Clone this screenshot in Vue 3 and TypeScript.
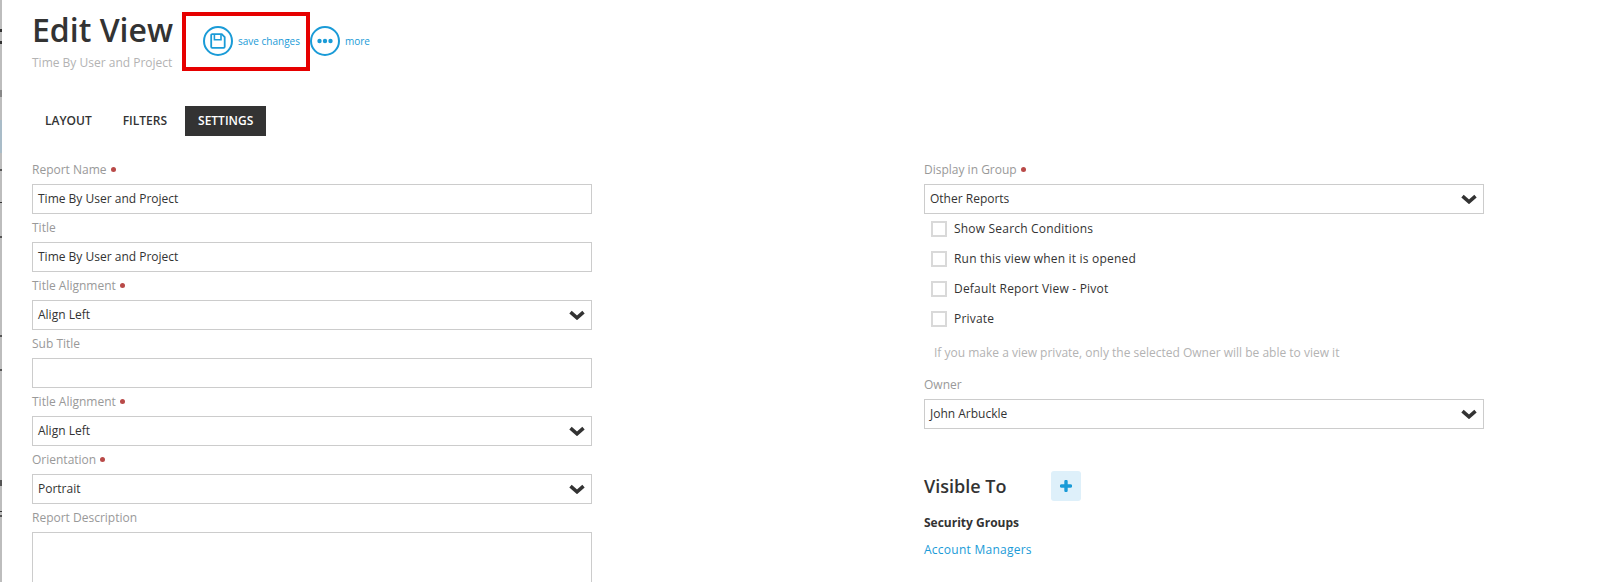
<script setup lang="ts">
interface Field {
  label: string
  required?: boolean
  value?: string
  select?: boolean
  area?: boolean
}

const leftFields: Field[] = [
  { label: 'Report Name', required: true, value: 'Time By User and Project' },
  { label: 'Title', value: 'Time By User and Project' },
  { label: 'Title Alignment', required: true, value: 'Align Left', select: true },
  { label: 'Sub Title', value: '' },
  { label: 'Title Alignment', required: true, value: 'Align Left', select: true },
  { label: 'Orientation', required: true, value: 'Portrait', select: true },
  { label: 'Report Description', value: '', area: true },
]

const checks = [
  'Show Search Conditions',
  'Run this view when it is opened',
  'Default Report View - Pivot',
  'Private',
]
const tabs = ['LAYOUT', 'FILTERS', 'SETTINGS']
</script>

<template>
  <div class="page">
    <div class="edge"></div>
    <header class="head">
      <div class="heading">
        <h1>Edit View</h1>
        <p>Time By User and Project</p>
      </div>
      <div class="actions">
        <a class="action save">
          <span class="circle">
            <svg width="16" height="16" viewBox="0 0 16 16" fill="none">
              <path d="M2.2 1.2h9.6l2.9 2.9v9.7a1 1 0 0 1-1 1H2.2a1 1 0 0 1-1-1V2.2a1 1 0 0 1 1-1z" stroke="#1a9bd7" stroke-width="1.8" />
              <path d="M4.4 1.2v5.6h6.6V1.2" stroke="#1a9bd7" stroke-width="1.6" />
            </svg>
          </span>
          <span>save changes</span>
        </a>
        <a class="action">
          <span class="circle">
            <svg width="18" height="6" viewBox="0 0 18 6" fill="#1a9bd7">
              <circle cx="3.5" cy="3" r="2.2" />
              <circle cx="9" cy="3" r="2.2" />
              <circle cx="14.5" cy="3" r="2.2" />
            </svg>
          </span>
          <span>more</span>
        </a>
        <div class="highlight"></div>
      </div>
    </header>

    <nav class="tabs">
      <a v-for="t in tabs" :key="t" class="tab" :class="{ active: t === 'SETTINGS' }">{{ t }}</a>
    </nav>

    <main class="cols">
      <section class="col">
        <div v-for="(f, i) in leftFields" :key="i" class="group">
          <label class="label">{{ f.label }}<i v-if="f.required" class="dot"></i></label>
          <div class="field" :class="{ area: f.area }">
            <span>{{ f.value }}</span>
            <svg v-if="f.select" class="chev" width="16" height="10" viewBox="0 0 16 10">
              <path d="M1.5 2.2 8 7.8l6.5-5.6" fill="none" stroke="#333" stroke-width="3.6" />
            </svg>
          </div>
        </div>
      </section>

      <section class="col">
        <div class="group">
          <label class="label">Display in Group<i class="dot"></i></label>
          <div class="field">
            <span>Other Reports</span>
            <svg class="chev" width="16" height="10" viewBox="0 0 16 10">
              <path d="M1.5 2.2 8 7.8l6.5-5.6" fill="none" stroke="#333" stroke-width="3.6" />
            </svg>
          </div>
        </div>
        <div class="checks">
          <div v-for="c in checks" :key="c" class="check">
            <span class="box"></span>
            <span>{{ c }}</span>
          </div>
        </div>
        <p class="hint">If you make a view private, only the selected Owner will be able to view it</p>
        <div class="group">
          <label class="label">Owner</label>
          <div class="field">
            <span>John Arbuckle</span>
            <svg class="chev" width="16" height="10" viewBox="0 0 16 10">
              <path d="M1.5 2.2 8 7.8l6.5-5.6" fill="none" stroke="#333" stroke-width="3.6" />
            </svg>
          </div>
        </div>
        <div class="visible">
          <h2>Visible To</h2>
          <button class="plus" type="button">
            <svg width="12" height="12" viewBox="0 0 12 12">
              <path d="M6 1.5v9M1.5 6h9" stroke="#1a9bd7" stroke-width="3.4" stroke-linecap="round" />
            </svg>
          </button>
        </div>
        <h3>Security Groups</h3>
        <a class="link">Account Managers</a>
      </section>
    </main>
  </div>
</template>

<style>
html,
body {
  margin: 0;
  overflow: hidden;
  background: #fff;
}
</style>

<style scoped>
.page {
  position: relative;
  height: 582px;
  overflow: hidden;
  padding-left: 32px;
  background: #fff;
  color: #333;
  font-family: "Open Sans", "Liberation Sans", sans-serif;
  font-size: 12px;
}
.edge {
  position: absolute;
  left: 0;
  top: 0;
  width: 2px;
  height: 582px;
  background:
    linear-gradient(#333, #333) 0 29px / 2px 3px no-repeat,
    linear-gradient(#333, #333) 0 41px / 2px 3px no-repeat,
    linear-gradient(#888, #888) 0 90px / 2px 7px no-repeat,
    linear-gradient(#a9bcc8, #a9bcc8) 0 120px / 2px 33px no-repeat,
    linear-gradient(#555, #555) 0 169px / 2px 2px no-repeat,
    linear-gradient(#333, #333) 0 202px / 2px 1px no-repeat,
    linear-gradient(#555, #555) 0 236px / 2px 2px no-repeat,
    linear-gradient(#555, #555) 0 335px / 2px 2px no-repeat,
    linear-gradient(#555, #555) 0 369px / 2px 2px no-repeat,
    linear-gradient(#555, #555) 0 480px / 2px 6px no-repeat,
    linear-gradient(#333, #333) 0 511px / 2px 1px no-repeat,
    linear-gradient(#555, #555) 0 515px / 2px 2px no-repeat,
    #bdbdbd;
}
.head {
  display: flex;
  align-items: flex-start;
  height: 106px;
}
.heading {
  width: 141px;
}
h1 {
  margin: 11px 0 0;
  font-size: 32px;
  line-height: 38px;
  font-weight: 600;
  white-space: nowrap;
}
.heading p {
  margin: 6px 0 0;
  color: #b3b3b3;
  font-size: 12px;
  line-height: 16px;
  white-space: nowrap;
}
.actions {
  position: relative;
  display: flex;
  gap: 10px;
  margin: 26px 0 0 30px;
}
.action {
  display: flex;
  align-items: center;
  gap: 5px;
  color: #1a9bd7;
  font-size: 10px;
  white-space: nowrap;
}
.circle {
  display: flex;
  align-items: center;
  justify-content: center;
  box-sizing: border-box;
  width: 30px;
  height: 30px;
  border: 2px solid #1a9bd7;
  border-radius: 50%;
}
.highlight {
  position: absolute;
  left: -21px;
  top: -14px;
  box-sizing: border-box;
  width: 128px;
  height: 59px;
  border: 4px solid #e60000;
}
.tabs {
  display: flex;
  gap: 5px;
  height: 30px;
}
.tab {
  display: flex;
  align-items: center;
  padding: 0 13px 2px;
  font-weight: 600;
  color: #333;
}
.tab.active {
  background: #333;
  color: #fff;
}
.cols {
  display: grid;
  grid-template-columns: 560px 560px;
  column-gap: 332px;
  margin-top: 20px;
}
.label {
  display: flex;
  align-items: center;
  box-sizing: border-box;
  height: 28px;
  padding-bottom: 2px;
  color: #999;
}
.dot {
  width: 5px;
  height: 5px;
  margin-left: 4px;
  border-radius: 50%;
  background: #b94a48;
}
.field {
  display: flex;
  align-items: center;
  justify-content: space-between;
  box-sizing: border-box;
  height: 30px;
  padding: 0 5px 2px 5px;
  border: 1px solid #ccc;
}
.field.area {
  height: 90px;
}
.chev {
  margin: 2px 1px 0 0;
}
.checks {
  display: flex;
  flex-direction: column;
  gap: 14px;
  margin: 7px 0 0 7px;
}
.check {
  display: flex;
  align-items: center;
  gap: 7px;
  box-sizing: border-box;
  height: 16px;
  padding-bottom: 1px;
  letter-spacing: 0.2px;
}
.box {
  box-sizing: border-box;
  flex: none;
  width: 16px;
  height: 16px;
  margin-top: 1px;
  border: 2px solid #d9d9d9;
}
.hint {
  margin: 18px 0 0 10px;
  color: #b3b3b3;
  line-height: 16px;
}
.hint + .group {
  margin-top: 10px;
}
.visible {
  display: flex;
  align-items: center;
  gap: 45px;
  margin-top: 42px;
}
h2 {
  margin: 0;
  font-size: 18px;
  font-weight: 600;
  line-height: 30px;
}
.plus {
  display: flex;
  align-items: center;
  justify-content: center;
  width: 30px;
  height: 30px;
  padding: 0;
  border: 0;
  border-radius: 3px;
  background: #def0fa;
}
h3 {
  margin: 14px 0 0;
  font-size: 12px;
  font-weight: 700;
  line-height: 16px;
}
.link {
  display: block;
  margin-top: 11px;
  color: #1a9bd7;
  line-height: 16px;
  letter-spacing: 0.25px;
}
</style>
